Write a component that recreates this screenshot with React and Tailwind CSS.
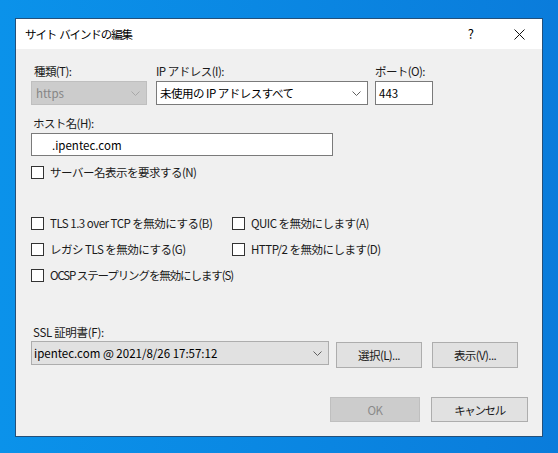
import React from "react";

const font = { fontFamily: '"Noto Sans CJK JP", "Noto Sans", sans-serif' };

function Chevron({ color = "#606060" }) {
  return (
    <svg width="9" height="5" viewBox="0 0 9 5" fill="none">
      <path d="M0.5 0.5 L4.5 4.5 L8.5 0.5" stroke={color} strokeWidth="1" />
    </svg>
  );
}

function Check({ label, tight = false }) {
  return (
    <div className="flex items-center h-[16px] gap-[6px]">
      <div className="w-[13px] h-[13px] border border-[#333333] bg-white shrink-0" />
      <span
        className={
          "text-[11.5px] leading-[16px] text-[#1a1a1a] whitespace-nowrap " +
          (tight ? "tracking-[-1.1px]" : "tracking-[-0.5px]")
        }
      >
        {label}
      </span>
    </div>
  );
}

function Btn({ children, className = "", disabled = false }) {
  return (
    <div
      className={
        "flex items-center justify-center text-[11.5px] leading-[16px] tracking-[-0.6px] border " +
        (disabled
          ? "bg-[#cccccc] border-[#bfbfbf] text-[#8a8a8a] "
          : "bg-[#e1e1e1] border-[#adadad] text-[#1a1a1a] ") +
        className
      }
    >
      {children}
    </div>
  );
}

export default function App() {
  return (
    <div
      style={font}
      className="w-[558px] h-[453px] overflow-hidden bg-gradient-to-r from-[#0b92ea] to-[#0a7cdb] pl-[15px] pt-[18px]"
    >
      <div className="w-[528px] h-[419px] border border-[#24507a] bg-[#f0f0f0] flex flex-col">
        {/* title bar */}
        <div className="h-[30px] bg-white flex items-center shrink-0">
          <span className="pl-[9px] text-[11.5px] leading-[16px] tracking-[-1.1px] text-black whitespace-pre">サイト  バインドの編集</span>
          <span className="ml-auto text-[13px] leading-[16px] text-black mr-[40px]">?</span>
          <svg width="11" height="11" viewBox="0 0 11 11" className="mr-[17px]">
            <path d="M0.5 0.5 L10.5 10.5 M10.5 0.5 L0.5 10.5" stroke="#111" strokeWidth="1" />
          </svg>
        </div>

        {/* content */}
        <div className="flex flex-col pl-[15px] pt-[14px] flex-1">
          <div className="flex items-start">
            <div className="flex flex-col w-[116px]">
              <span className="text-[11.5px] leading-[16px] tracking-[-0.6px] text-[#1a1a1a] pl-[3px]">種類(T):</span>
              <div className="mt-[2px] h-[24px] bg-[#cccccc] border border-[#bfbfbf] flex items-center pl-[4px] pr-[6px]">
                <span className="text-[11.5px] leading-[16px] text-[#858585]">https</span>
                <span className="ml-auto flex"><Chevron color="#a8a8a8" /></span>
              </div>
            </div>
            <div className="flex flex-col w-[212px] ml-[9px]">
              <span className="text-[11.5px] leading-[16px] tracking-[-0.5px] text-[#1a1a1a]">IP アドレス(I):</span>
              <div className="mt-[2px] h-[24px] bg-white border border-[#7a7a7a] flex items-center pl-[3px] pr-[6px]">
                <span className="text-[11.5px] leading-[16px] tracking-[-0.5px] text-black">未使用の IP アドレスすべて</span>
                <span className="ml-auto flex"><Chevron /></span>
              </div>
            </div>
            <div className="flex flex-col w-[58px] ml-[7px]">
              <span className="text-[11.5px] leading-[16px] tracking-[-0.6px] text-[#1a1a1a]">ポート(O):</span>
              <div className="mt-[2px] h-[24px] bg-white border border-[#7a7a7a] flex items-center pl-[3px]">
                <span className="text-[11.5px] leading-[16px] text-black">443</span>
              </div>
            </div>
          </div>

          <span className="mt-[10px] text-[11.5px] leading-[16px] tracking-[-0.6px] text-[#1a1a1a] pl-[2px]">ホスト名(H):</span>
          <div className="mt-[2px] h-[23px] w-[302px] bg-white border border-[#7a7a7a] flex items-center pl-[20px]">
            <span className="text-[11.5px] leading-[16px] text-black">.ipentec.com</span>
          </div>

          <div className="mt-[8px]">
            <Check label="サーバー名表示を要求する(N)" />
          </div>

          <div className="mt-[35px] grid grid-cols-[201px_1fr] gap-y-[10px]">
            <Check label="TLS 1.3 over TCP を無効にする(B)" />
            <Check label="QUIC を無効にします(A)" />
            <Check label="レガシ TLS を無効にする(G)" />
            <Check label="HTTP/2 を無効にします(D)" />
            <Check tight label="OCSP ステープリングを無効にします(S)" />
          </div>

          <span className="mt-[41px] text-[11.5px] leading-[16px] tracking-[-0.3px] text-[#1a1a1a] pl-[2px]">SSL 証明書(F):</span>
          <div className="mt-[1px] flex items-start">
            <div className="h-[24px] w-[298px] bg-[#e1e1e1] border border-[#adadad] flex items-center pl-[2px] pr-[6px]">
              <span className="text-[11.5px] leading-[16px] text-black">ipentec.com @ 2021/8/26 17:57:12</span>
              <span className="ml-auto flex"><Chevron /></span>
            </div>
            <Btn className="ml-[7px] mt-[1px] w-[86px] h-[26px]">選択(L)...</Btn>
            <Btn className="ml-[10px] mt-[1px] w-[86px] h-[26px]">表示(V)...</Btn>
          </div>

          <div className="mt-[29px] flex justify-end pr-[14px] gap-[11px]">
            <Btn disabled className="w-[90px] h-[25px]">OK</Btn>
            <Btn className="w-[97px] h-[25px]"><span className="tracking-[-1.4px]">キャンセル</span></Btn>
          </div>
        </div>
      </div>
    </div>
  );
}
